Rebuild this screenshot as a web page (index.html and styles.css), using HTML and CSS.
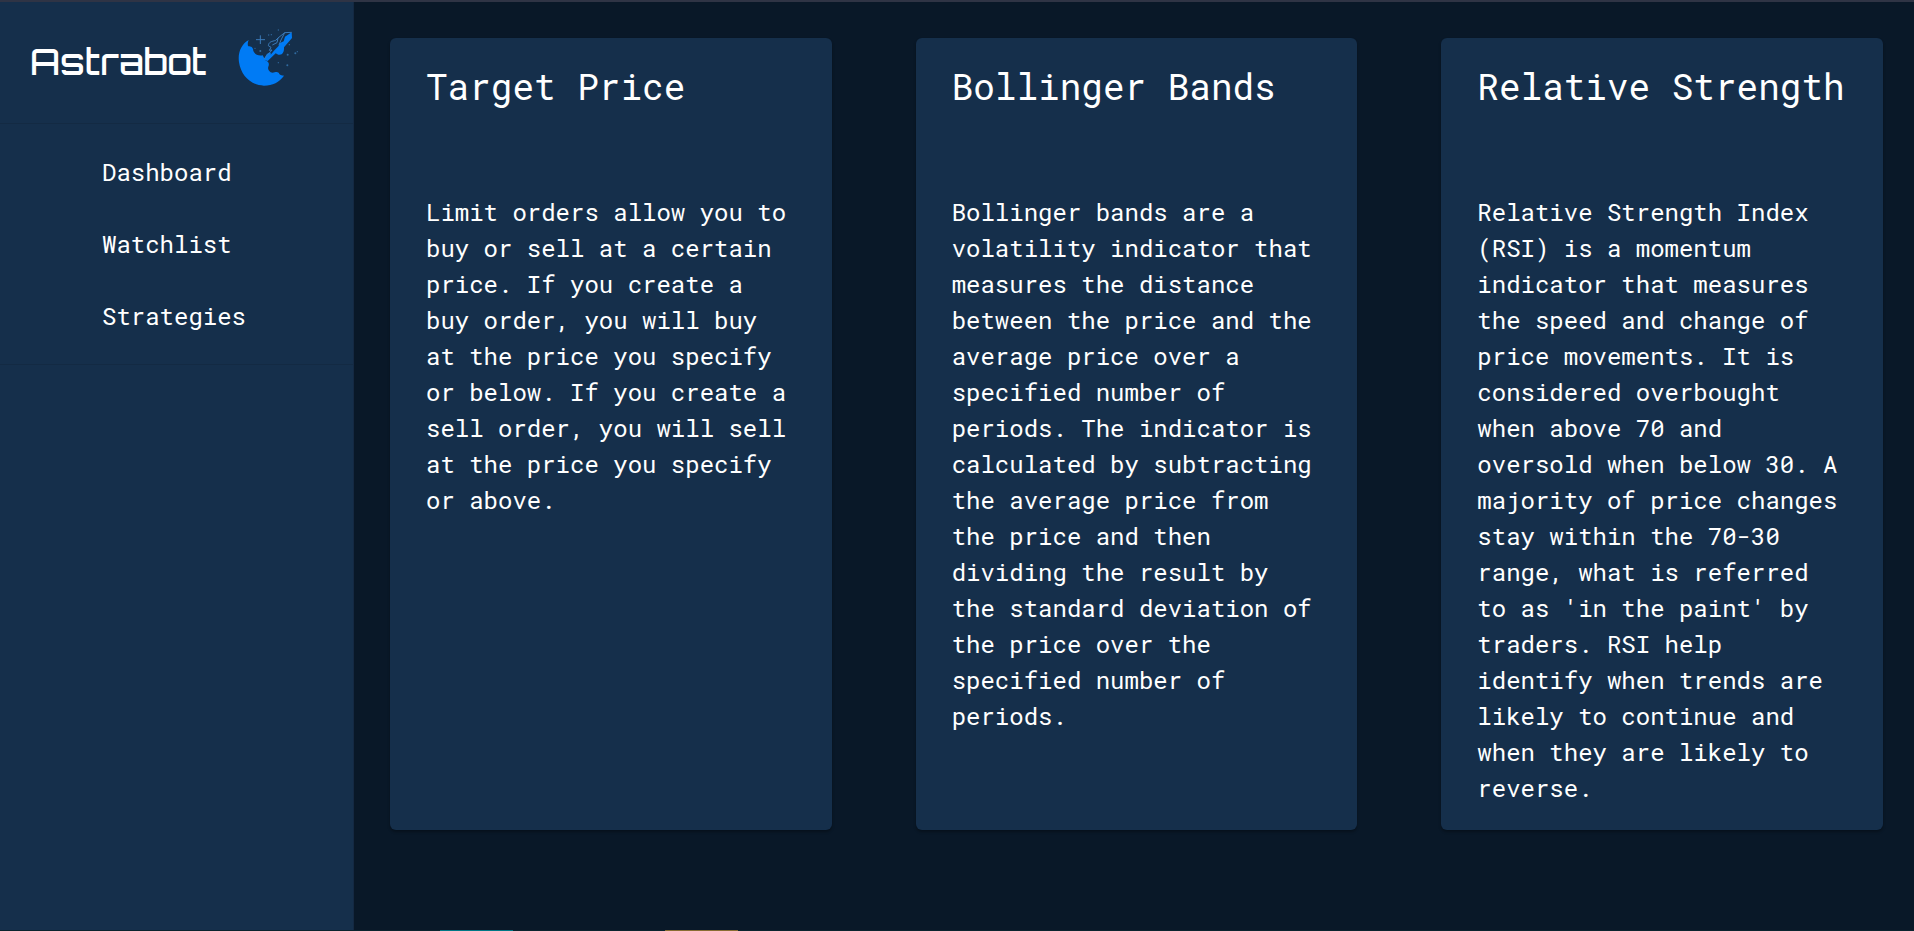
FILE: index.html
```html
<!DOCTYPE html>
<html lang="en">
<head>
<meta charset="utf-8">
<title>Astrabot – Strategies</title>
<link rel="stylesheet" href="styles.css">
</head>
<body>
<div class="app">
  <aside class="sidebar">
    <header class="brand">
      <span class="brand-name">Astrabot</span>
      <svg class="brand-logo" viewBox="36 24 186 201" aria-hidden="true">
        <path fill="#007bf5" d="M71 60C48 73 38 99 42 127C48 167 78 196 117 197C143 197 163 186 177 167C170 165 164 166 161 158C152 153 147 161 137 157C130 151 127 145 131 137C133 130 130 124 121 121L113 106C101 109 89 103 85 93C84 81 78 79 70 79C67 74 68 67 71 60Z"/>
        <path fill="#007bf5" d="M200 37L201 54L177 82C178 96 172 107 160 104L152 100L128 123L116 119L124 104C132 96 139 94 137 104L147 92L160 79L165 69L176 64L180 50Z"/>
        <g fill="none" stroke="#3b7ab8" stroke-width="3">
          <path d="M200 37L179 38L159 54L152 61C140 65 132 64 130 77L138 82L133 91L141 90L117 117M159 54L156 68L142 75M179 38L168 60L162 75"/>
          <path d="M106 46V72M93 59H120"/>
        </g>
        <g fill="#316a9f">
          <circle cx="106" cy="93" r="3"/><circle cx="160" cy="128" r="2"/><circle cx="187" cy="136" r="3"/>
          <circle cx="188" cy="104" r="3"/><circle cx="211" cy="100" r="3"/><circle cx="131" cy="45" r="2"/>
          <circle cx="139" cy="44" r="2"/><circle cx="160" cy="30" r="2"/><circle cx="217" cy="95" r="2"/>
          <circle cx="193" cy="74" r="2"/><circle cx="90" cy="85" r="2"/>
        </g>
      </svg>
    </header>
    <nav class="nav">
      <a href="#dashboard">Dashboard</a>
      <a href="#watchlist">Watchlist</a>
      <a href="#strategies">Strategies</a>
    </nav>
  </aside>
  <main class="content">
    <section class="cards">
      <article class="card">
        <h2>Target Price</h2>
        <p>Limit orders allow you to buy or sell at a certain price. If you create a buy order, you will buy at the price you specify or below. If you create a sell order, you will sell at the price you specify or above.</p>
      </article>
      <article class="card">
        <h2>Bollinger Bands</h2>
        <p>Bollinger bands are a volatility indicator that measures the distance between the price and the average price over a specified number of periods. The indicator is calculated by subtracting the average price from the price and then dividing the result by the standard deviation of the price over the specified number of periods.</p>
      </article>
      <article class="card">
        <h2>Relative Strength</h2>
        <p>Relative Strength Index (RSI) is a momentum indicator that measures the speed and change of price movements. It is considered overbought when above 70 and oversold when below 30. A majority of price changes stay within the 70-30 range, what is referred to as 'in the paint' by traders. RSI help identify when trends are likely to continue and when they are likely to reverse.</p>
      </article>
    </section>
  </main>
  <footer class="edge"><span class="mark teal"></span><span class="mark amber"></span></footer>
</div>
</body>
</html>
```
FILE: styles.css
```css
* { box-sizing: border-box; }

body {
  margin: 0;
  background: #091828;
  color: #fff;
  font-family: "Roboto Mono", "Liberation Mono", monospace;
  font-size: 24px;
  line-height: 36px;
}

.app {
  display: grid;
  grid-template-columns: 354px 1fr;
  grid-template-rows: 1fr 1px;
  min-height: 100vh;
  border-top: 2px solid #2f3445;
}

.sidebar {
  background: #152f4b;
  border-right: 1px solid #142943;
}

.brand {
  display: flex;
  align-items: center;
  gap: 30px;
  height: 122px;
  padding: 0 30px 2px;
  border-bottom: 1px solid #132a43;
}

.brand-name {
  font: 500 36px/48px Orbitron, "DejaVu Sans", sans-serif;
}

.brand-logo {
  width: 62px;
  height: 67px;
}

.nav {
  display: flex;
  flex-direction: column;
  padding: 12px 0;
  border-bottom: 1px solid #132a43;
}

.nav a {
  padding: 18px 102px;
  color: inherit;
  text-decoration: none;
}

.content {
  padding: 36px 31px 36px 36px;
}

.cards {
  display: grid;
  grid-template-columns: repeat(3, 1fr);
  gap: 84px;
}

.card {
  padding: 26px 36px 24px;
  border-radius: 6px;
  background: #152f4b;
  box-shadow: 0 2px 3px rgba(0, 0, 0, 0.3);
}

.card h2 {
  margin: 0 0 86px;
  font-size: 36px;
  font-weight: 400;
  line-height: 44px;
}

.card p {
  margin: 0;
}

.edge {
  display: flex;
  grid-column: 1 / -1;
  gap: 152px;
  padding-left: 440px;
  background: #0a252f;
}

.mark {
  width: 73px;
}

.teal { background: #007886; }
.amber { background: #8a6d33; }
```
